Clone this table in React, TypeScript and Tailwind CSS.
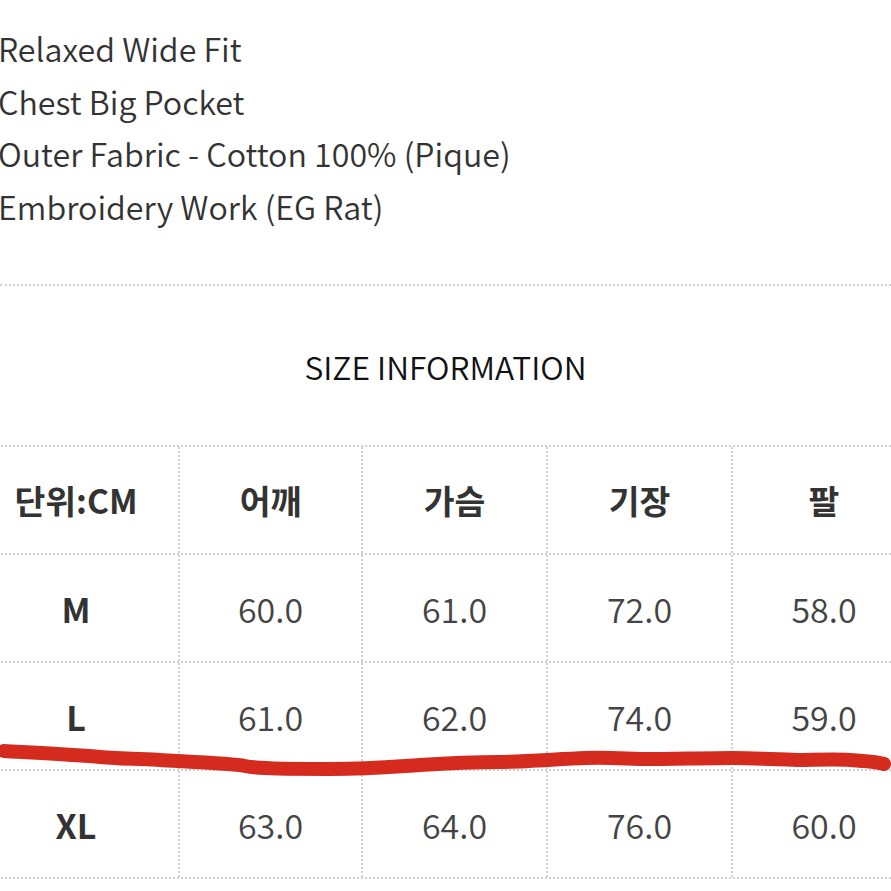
import React from "react";

const features = [
  "Relaxed Wide Fit",
  "Chest Big Pocket",
  "Outer Fabric - Cotton 100% (Pique)",
  "Embroidery Work (EG Rat)",
];

const headers = ["단위:CM", "어깨", "가슴", "기장", "팔"];

const rows = [
  ["M", "60.0", "61.0", "72.0", "58.0"],
  ["L", "61.0", "62.0", "74.0", "59.0"],
  ["XL", "63.0", "64.0", "76.0", "60.0"],
];

const font = { fontFamily: '"Noto Sans CJK KR", "Noto Sans", sans-serif' };

export default function App() {
  return (
    <div className="relative w-[891px] h-[891px] overflow-hidden bg-white" style={font}>
      <div className="pt-[22px] -ml-[2px] text-[32.2px] leading-[52.5px] font-[350] text-[#333]">
        {features.map((f) => (
          <div key={f}>{f}</div>
        ))}
      </div>

      <div className="mt-[52px] border-t-2 border-dotted border-[#d0d0d0]" />

      <h2 className="mt-[60px] text-center text-[31.8px] leading-[40px] text-[#111] font-[350]">SIZE INFORMATION</h2>

      <div className="mt-[59px] -ml-[26px] w-[941px] border-t-2 border-dotted border-[#d0d0d0]">
        <div className="grid grid-cols-[206px_183px_185px_185px_182px] h-[108px] border-b-2 border-dotted border-[#d0d0d0]">
          {headers.map((h, i) => (
            <div
              key={h}
              className={`flex items-center justify-center text-[33.5px] font-bold text-[#333] ${i < 4 ? "border-r-2 border-dotted border-[#d0d0d0]" : ""}`}
            >
              {h}
            </div>
          ))}
        </div>
        {rows.map((r) => (
          <div key={r[0]} className="grid grid-cols-[206px_183px_185px_185px_182px] h-[108px] border-b-2 border-dotted border-[#d0d0d0]">
            {r.map((c, i) => (
              <div
                key={i}
                className={`flex items-center justify-center text-[34px] ${i < 4 ? "border-r-2 border-dotted border-[#d0d0d0]" : ""} ${i === 0 ? "font-bold text-[#333]" : "font-[350] text-[#444]"}`}
              >
                {c}
              </div>
            ))}
          </div>
        ))}
      </div>

      <svg className="absolute left-0 top-0 pointer-events-none" width="891" height="891" viewBox="0 0 891 891">
        <path
          d="M4 751 C40 753 80 755 100 757 S150 759 160 760 S230 763 245 766 S290 769 330 769 S390 767 420 765 S480 762 500 762 S560 759 585 758 S630 759 650 759 S710 758 733 758 S790 760 800 760 S835 759 850 760 S878 762 884 764"
          fill="none"
          stroke="#d52a1e"
          strokeWidth="14"
          strokeLinecap="round"
          strokeLinejoin="round"
        />
      </svg>
    </div>
  );
}
